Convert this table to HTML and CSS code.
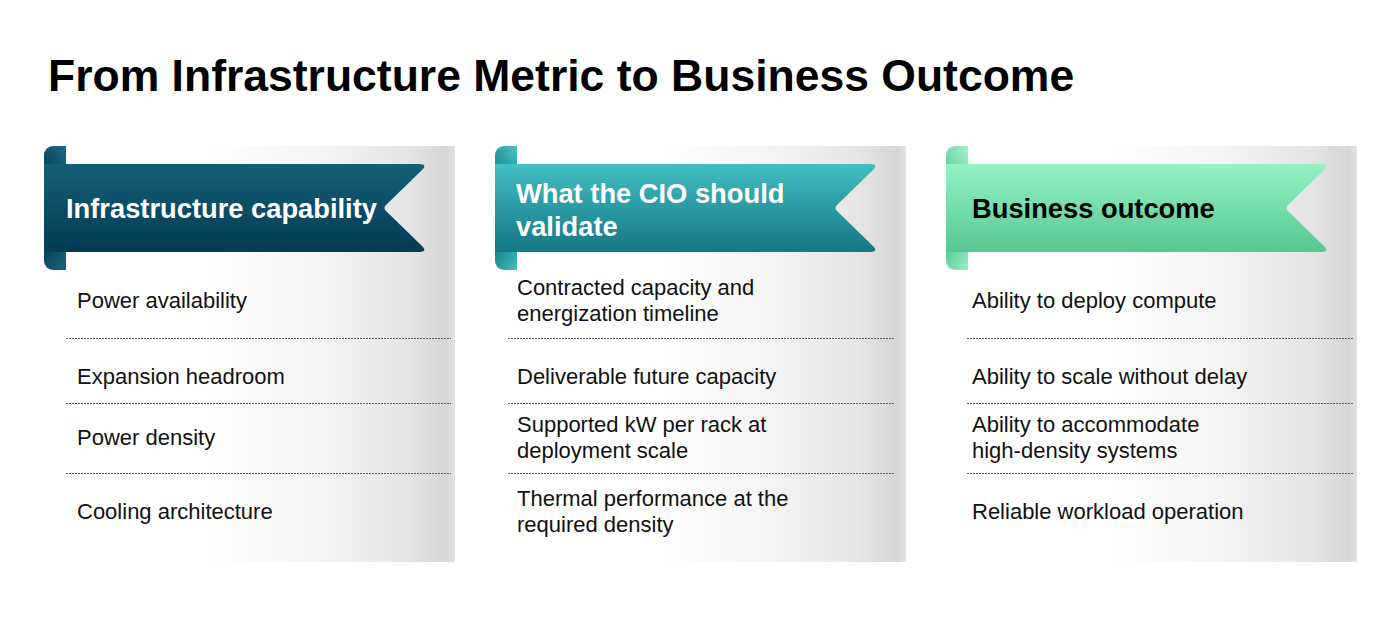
FILE: index.html
```html
<!DOCTYPE html>
<html lang="en">
<head>
<meta charset="utf-8">
<title>From Infrastructure Metric to Business Outcome</title>
<link rel="stylesheet" href="styles.css">
</head>
<body>
<main class="page">
  <h1 class="title">From Infrastructure Metric to Business Outcome</h1>
  <div class="columns">
    <section class="card card-1">
      <header class="ribbon">
        <svg class="ribbon-art" width="384" height="124" viewBox="0 0 384 124" aria-hidden="true">
          <defs>
            <linearGradient id="b1" x1="0" y1="0" x2="0" y2="1"><stop offset="0" stop-color="#145f76"/><stop offset="1" stop-color="#053b53"/></linearGradient>
            <linearGradient id="t1" x1="0" y1="1" x2="1" y2="0"><stop offset="0" stop-color="#073f55"/><stop offset="0.55" stop-color="#0f566d"/><stop offset="1" stop-color="#1b6d84"/></linearGradient>
            <linearGradient id="u1" x1="0" y1="0" x2="1" y2="1"><stop offset="0" stop-color="#063a50"/><stop offset="0.5" stop-color="#0d5168"/><stop offset="1" stop-color="#17667c"/></linearGradient>
          </defs>
          <path d="M9 0 H22 V30 H0 V9 A9 9 0 0 1 9 0 Z" fill="url(#t1)"/>
          <path d="M0 94 H22 V124 H9 A9 9 0 0 1 0 115 Z" fill="url(#u1)"/>
          <path d="M0 18 H375 Q384 18 378 24 L342 59 Q339 62 342 65 L378 100 Q384 106 375 106 H0 Z" fill="url(#b1)"/>
        </svg>
        <h2 class="ribbon-text">Infrastructure capability</h2>
      </header>
      <ul class="rows">
        <li class="row row-1">Power availability</li>
        <li class="row row-2">Expansion headroom</li>
        <li class="row row-3">Power density</li>
        <li class="row row-4">Cooling architecture</li>
      </ul>
    </section>
    <section class="card card-2">
      <header class="ribbon">
        <svg class="ribbon-art" width="384" height="124" viewBox="0 0 384 124" aria-hidden="true">
          <defs>
            <linearGradient id="b2" x1="0" y1="0" x2="0" y2="1"><stop offset="0" stop-color="#42bec2"/><stop offset="1" stop-color="#147784"/></linearGradient>
            <linearGradient id="t2" x1="0" y1="1" x2="1" y2="0"><stop offset="0" stop-color="#17838c"/><stop offset="0.55" stop-color="#2fa5aa"/><stop offset="1" stop-color="#4cc4c6"/></linearGradient>
            <linearGradient id="u2" x1="0" y1="0" x2="1" y2="1"><stop offset="0" stop-color="#137580"/><stop offset="0.5" stop-color="#259aa0"/><stop offset="1" stop-color="#45bcbf"/></linearGradient>
          </defs>
          <path d="M9 0 H22 V30 H0 V9 A9 9 0 0 1 9 0 Z" fill="url(#t2)"/>
          <path d="M0 94 H22 V124 H9 A9 9 0 0 1 0 115 Z" fill="url(#u2)"/>
          <path d="M0 18 H375 Q384 18 378 24 L342 59 Q339 62 342 65 L378 100 Q384 106 375 106 H0 Z" fill="url(#b2)"/>
        </svg>
        <h2 class="ribbon-text">What the CIO should validate</h2>
      </header>
      <ul class="rows">
        <li class="row row-1">Contracted capacity and<br>energization timeline</li>
        <li class="row row-2">Deliverable future capacity</li>
        <li class="row row-3">Supported kW per rack at<br>deployment scale</li>
        <li class="row row-4">Thermal performance at the<br>required density</li>
      </ul>
    </section>
    <section class="card card-3">
      <header class="ribbon">
        <svg class="ribbon-art" width="384" height="124" viewBox="0 0 384 124" aria-hidden="true">
          <defs>
            <linearGradient id="b3" x1="0" y1="0" x2="0" y2="1"><stop offset="0" stop-color="#94f2c5"/><stop offset="1" stop-color="#57c792"/></linearGradient>
            <linearGradient id="t3" x1="0" y1="1" x2="1" y2="0"><stop offset="0" stop-color="#5cc995"/><stop offset="0.55" stop-color="#80e2b3"/><stop offset="1" stop-color="#a2f3cc"/></linearGradient>
            <linearGradient id="u3" x1="0" y1="0" x2="1" y2="1"><stop offset="0" stop-color="#52c08c"/><stop offset="0.5" stop-color="#74d9a8"/><stop offset="1" stop-color="#98eec4"/></linearGradient>
          </defs>
          <path d="M9 0 H22 V30 H0 V9 A9 9 0 0 1 9 0 Z" fill="url(#t3)"/>
          <path d="M0 94 H22 V124 H9 A9 9 0 0 1 0 115 Z" fill="url(#u3)"/>
          <path d="M0 18 H375 Q384 18 378 24 L342 59 Q339 62 342 65 L378 100 Q384 106 375 106 H0 Z" fill="url(#b3)"/>
        </svg>
        <h2 class="ribbon-text">Business outcome</h2>
      </header>
      <ul class="rows">
        <li class="row row-1">Ability to deploy compute</li>
        <li class="row row-2">Ability to scale without delay</li>
        <li class="row row-3">Ability to accommodate<br>high-density systems</li>
        <li class="row row-4">Reliable workload operation</li>
      </ul>
    </section>
  </div>
</main>
</body>
</html>
```

FILE: styles.css
```css
* { box-sizing: border-box; }

html, body {
  margin: 0;
  padding: 0;
  background: #ffffff;
}

body {
  font-family: "Liberation Sans", Arial, Helvetica, sans-serif;
  color: #111111;
}

.page {
  width: 1400px;
  height: 637px;
  padding: 51px 0 0 0;
}

.title {
  margin: 0 0 45px 48px;
  font-size: 44.5px;
  line-height: 50px;
  font-weight: 700;
  color: #000000;
}

.columns {
  display: grid;
  grid-template-columns: 405px 405px 405px;
  column-gap: 46px;
  padding-left: 50px;
}

.card {
  height: 416px;
  display: flex;
  flex-direction: column;
  background: linear-gradient(to right, #ffffff 0%, #ffffff 40%, #f3f3f3 68%, #e5e5e5 88%, #d6d6d6 98%, #e2e2e2 100%);
}

.ribbon {
  position: relative;
  height: 124px;
  width: 384px;
  margin-left: -6px;
  flex: none;
}

.ribbon-art {
  position: absolute;
  left: 0;
  top: 0;
  display: block;
}

.ribbon-text {
  position: relative;
  margin: 18px 0 0 0;
  height: 88px;
  display: flex;
  align-items: center;
  padding-left: 22px;
  padding-top: 1px;
  max-width: 330px;
  font-size: 27.3px;
  line-height: 33px;
  font-weight: 700;
  color: #ffffff;
}

.card-1 .ribbon-text {
  white-space: nowrap;
  max-width: none;
}

.card-2 .ribbon-text {
  padding-left: 21px;
  padding-top: 4px;
}

.card-3 .ribbon-text {
  color: #000000;
  padding-left: 26px;
}

.rows {
  flex: 1;
  list-style: none;
  margin: 0;
  display: grid;
  grid-template-rows: 68px 65px 70px 1fr;
}

.card-1 .rows { padding: 0 4px 0 16px; }
.card-2 .rows { padding: 0 11px 0 7px; }
.card-3 .rows { padding: 0 3px 0 15px; }

.row {
  display: flex;
  align-items: center;
  font-size: 22px;
  line-height: 26px;
  color: #111111;
}

.card-1 .row { padding-left: 11px; }
.card-2 .row { padding-left: 9px; }
.card-3 .row { padding-left: 5px; }

.row + .row {
  background-image: linear-gradient(to right, #5e5e5e 2px, transparent 2px);
  background-size: 3px 1px;
  background-repeat: repeat-x;
  background-position: left top;
}

.row-1 { padding-bottom: 6px; }
.row-2 { padding-top: 13px; }
.row-4 { padding-bottom: 11px; }
```
